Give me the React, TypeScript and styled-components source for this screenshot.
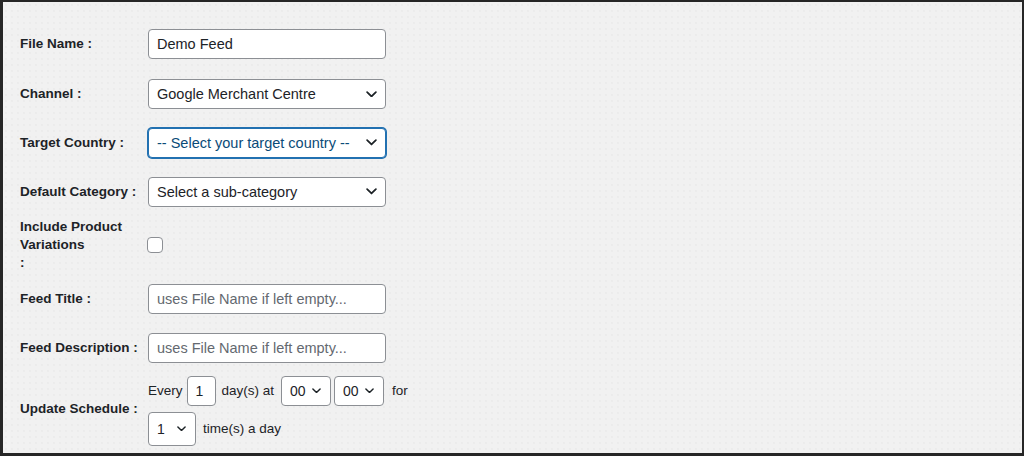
import React from "react";
import styled, { createGlobalStyle } from "styled-components";

const Global = createGlobalStyle`
  html, body { margin: 0; padding: 0; }
  body { font-family: "Liberation Sans", Arial, sans-serif; color: #1d2327; }
  * { box-sizing: border-box; }
`;

const Frame = styled.div`
  width: 1024px;
  height: 456px;
  border-style: solid;
  border-color: #262626;
  border-width: 2px 2px 3px 3px;
  background-color: #f1f1f1;
  background-image: radial-gradient(#e6e6e6 0.6px, transparent 0.8px);
  background-size: 6px 6px;
  padding: 17px 0 0 17px;
`;

const Form = styled.div`
  display: flex;
  flex-direction: column;
`;

const Row = styled.div<{ $h: number }>`
  display: grid;
  grid-template-columns: 128px auto;
  align-items: center;
  height: ${(p) => p.$h}px;
`;

const Label = styled.div`
  font-size: 13.5px;
  font-weight: 700;
  line-height: 18px;
  color: #1d2327;
`;

const Field = styled.div`
  display: flex;
  align-items: center;
`;

const TextInput = styled.input`
  width: 238px;
  height: 30px;
  border: 1px solid #8c8f94;
  border-radius: 4px;
  background: #fff;
  padding: 0 8px;
  font-family: "Liberation Sans", Arial, sans-serif;
  font-size: 14.5px;
  color: #1d2327;
  outline: none;
  &::placeholder { color: #646970; opacity: 1; }
`;

const SelectBox = styled.div<{ $w: number; $h?: number; $focus?: boolean; $small?: boolean }>`
  width: ${(p) => p.$w}px;
  height: ${(p) => p.$h ?? 30}px;
  border: 1px solid ${(p) => (p.$focus ? "#2271b1" : "#8c8f94")};
  box-shadow: ${(p) => (p.$focus ? "0 0 0 1px #2271b1" : "none")};
  border-radius: 4px;
  background: #fff;
  display: flex;
  align-items: center;
  justify-content: space-between;
  padding: 0 ${(p) => (p.$small ? 9 : 8)}px 0 8px;
  font-size: ${(p) => (p.$small ? 14 : 14.5)}px;
  color: ${(p) => (p.$focus ? "#0a4b78" : "#1d2327")};
  white-space: nowrap;
  overflow: hidden;
`;

const Chevron = ({ size = 11 }: { size?: number }) => (
  <svg width={size} height={size * 0.6} viewBox="0 0 10 6" style={{ flex: "none" }}>
    <path d="M1 1 L5 5 L9 1" fill="none" stroke="#1d2327" strokeWidth="1.6" strokeLinecap="round" strokeLinejoin="round" />
  </svg>
);

const Checkbox = styled.span`
  display: block;
  width: 16px;
  height: 16px;
  border: 1px solid #8c8f94;
  border-radius: 4px;
  background: #fff;
  margin-left: -1px;
`;

const Schedule = styled.div`
  display: flex;
  flex-direction: column;
  gap: 6px;
  padding-top: 3px;
`;

const Line = styled.div`
  display: flex;
  align-items: center;
  font-size: 13.5px;
  color: #1d2327;
`;

const Word = styled.span<{ $ml?: number; $mr?: number }>`
  margin-left: ${(p) => p.$ml ?? 0}px;
  margin-right: ${(p) => p.$mr ?? 0}px;
  line-height: 18px;
`;

const NumInput = styled.div`
  width: 29px;
  height: 30px;
  border: 1px solid #8c8f94;
  border-radius: 4px;
  background: #fff;
  padding-left: 8px;
  display: flex;
  align-items: center;
  font-size: 14px;
`;

const Gap = styled.span<{ $w: number }>`
  display: inline-block;
  width: ${(p) => p.$w}px;
`;

export default function App() {
  return (
    <>
      <Global />
      <Frame>
        <Form>
          <Row $h={50}>
            <Label>File Name :</Label>
            <Field>
              <TextInput defaultValue="Demo Feed" />
            </Field>
          </Row>
          <Row $h={50}>
            <Label>Channel :</Label>
            <Field>
              <SelectBox $w={238}>
                Google Merchant Centre
                <Chevron />
              </SelectBox>
            </Field>
          </Row>
          <Row $h={47}>
            <Label>Target Country :</Label>
            <Field>
              <SelectBox $w={238} $focus>
                -- Select your target country --
                <Chevron />
              </SelectBox>
            </Field>
          </Row>
          <Row $h={51}>
            <Label>Default Category :</Label>
            <Field>
              <SelectBox $w={238}>
                Select a sub-category
                <Chevron />
              </SelectBox>
            </Field>
          </Row>
          <Row $h={56}>
            <Label>
              Include Product
              <br />
              Variations
              <br />:
            </Label>
            <Field>
              <Checkbox />
            </Field>
          </Row>
          <Row $h={51}>
            <Label>Feed Title :</Label>
            <Field>
              <TextInput placeholder="uses File Name if left empty..." />
            </Field>
          </Row>
          <Row $h={47}>
            <Label>Feed Description :</Label>
            <Field>
              <TextInput placeholder="uses File Name if left empty..." />
            </Field>
          </Row>
          <Row $h={76}>
            <Label>Update Schedule :</Label>
            <Schedule>
              <Line>
                <Word $mr={4}>Every</Word>
                <NumInput>1</NumInput>
                <Word $ml={6} $mr={7}>day(s) at</Word>
                <SelectBox $w={50} $small>
                  00
                  <Chevron size={9} />
                </SelectBox>
                <Gap $w={3} />
                <SelectBox $w={50} $small>
                  00
                  <Chevron size={9} />
                </SelectBox>
                <Word $ml={8}>for</Word>
              </Line>
              <Line>
                <SelectBox $w={48} $h={34} $small>
                  1
                  <Chevron size={9} />
                </SelectBox>
                <Word $ml={7}>time(s) a day</Word>
              </Line>
            </Schedule>
          </Row>
        </Form>
      </Frame>
    </>
  );
}
